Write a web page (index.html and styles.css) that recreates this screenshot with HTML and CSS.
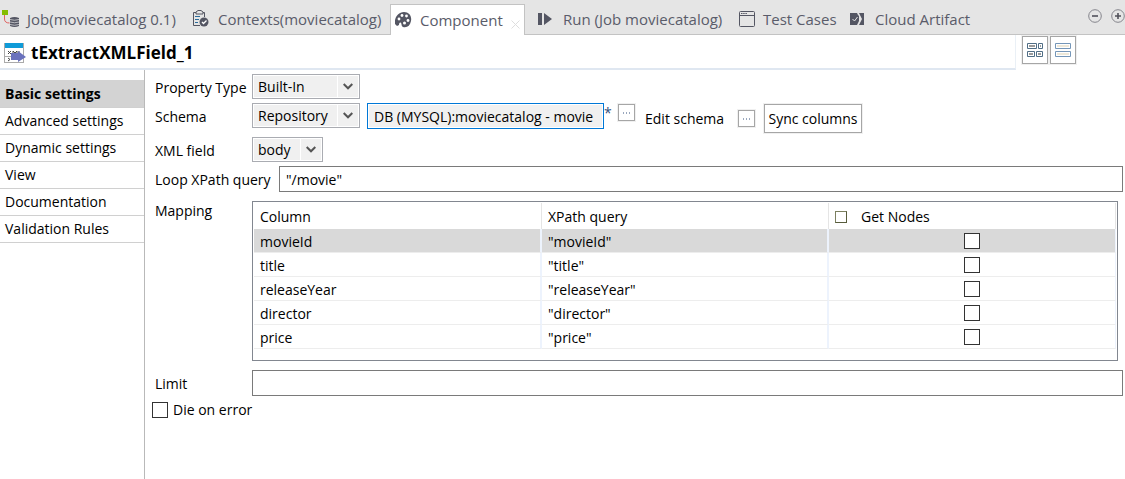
FILE: index.html
```html
<!DOCTYPE html>
<html lang="en">
<head>
<meta charset="utf-8">
<title>tExtractXMLField_1</title>
<link rel="stylesheet" href="styles.css">
</head>
<body>
<header class="tabbar">
  <nav class="tabs" role="tablist">
    <button class="tab tab-job" role="tab">
      <svg width="18" height="18" viewBox="0 0 18 18"><path d="M3.500 5v4q0 4 5 4" fill="none" stroke="#e0605e" stroke-width="1"/><rect x="1" y="0" width="6" height="5" fill="#84bd00"/><path d="M9 8q4.500-2 9 0v8q-4.500 2-9 0z" fill="#545663"/><path d="M9 9.500q4.500 1.500 9 0M9 12q4.500 1.500 9 0M9 14.500q4.500 1.500 9 0" fill="none" stroke="#d5d5d8" stroke-width=".8"/></svg>
      <span>Job(moviecatalog 0.1)</span>
    </button>
    <button class="tab tab-contexts" role="tab">
      <svg width="17" height="18" viewBox="0 0 17 18"><path d="M4 2.500H1.500v13H8M10 2.500h2.500V7" fill="none" stroke="#545663"/><path d="M4 4V2l2-1.500h3L11 2v2z" fill="#e5e5e5" stroke="#545663"/><path d="M3 6.500h5M3 9.500h4M3 12.500h3" stroke="#2b6c9b"/><circle cx="12" cy="12" r="4.500" fill="#545663"/><path d="M10 12l1.500 1.500 3-3" fill="none" stroke="#fff" stroke-width="1.300"/></svg>
      <span>Contexts(moviecatalog)</span>
    </button>
    <button class="tab tab-active" role="tab" aria-selected="true">
      <svg width="17" height="16" viewBox="0 0 17 16"><path d="M9 0C14 0 17 4 16 9s-4 7-8 6c-2-1-1-3-2-4s-2 0-2 2l-2 1-2-2C-1 6 3 0 9 0z" fill="#545663"/><g fill="#fff"><circle cx="4" cy="7" r="1.400"/><circle cx="7" cy="3.500" r="1.400"/><circle cx="11.500" cy="4" r="1.400"/><circle cx="13" cy="8.500" r="1.400"/><circle cx="9.500" cy="11" r="1.500"/></g></svg>
      <span>Component</span>
      <svg class="close" width="9" height="9" viewBox="0 0 9 9"><path d="M.5.5l8 8m0-8l-8 8" stroke="#dedede"/></svg>
    </button>
    <button class="tab tab-run" role="tab">
      <svg width="15" height="12" viewBox="0 0 15 12"><path d="M0 0h4v12H0zM6 0l8 6-8 6z" fill="#545663"/></svg>
      <span>Run (Job moviecatalog)</span>
    </button>
    <button class="tab tab-tests" role="tab">
      <svg width="16" height="16" viewBox="0 0 16 16"><rect x=".5" y=".5" width="15" height="15" rx="1" fill="none" stroke="#545663"/><path d="M1 4.500h14" stroke="#545663"/><path d="M2 2.500h6" stroke="#545663" stroke-dasharray="1.500 .7"/></svg>
      <span>Test Cases</span>
    </button>
    <button class="tab tab-cloud" role="tab">
      <svg width="15" height="12" viewBox="0 0 15 12"><path d="M0 0h7l1 2 1 1v5l-1 2-1 2H0zM9 0h5v12H9l3-6z" fill="#545663"/><path d="M2.500 6l2 2 3-4" fill="none" stroke="#e5e5e5"/></svg>
      <span>Cloud Artifact</span>
    </button>
  </nav>
  <div class="window-tools">
    <button class="plain" aria-label="Minimize"><svg width="14" height="14" viewBox="0 0 14 14"><circle cx="7" cy="7" r="6.300" fill="none" stroke="#85858c"/><path d="M4 7h6" stroke="#50505a" stroke-width="1.600"/></svg></button>
    <button class="plain" aria-label="Maximize"><svg width="14" height="14" viewBox="0 0 14 14"><circle cx="7" cy="7" r="6.300" fill="none" stroke="#85858c"/><path d="M4 7h6M7 4v6" stroke="#50505a" stroke-width="1.600"/></svg></button>
  </div>
</header>

<div class="titlebar">
  <div class="title">
    <svg width="22" height="20" viewBox="0 0 22 20"><rect x=".5" y=".5" width="19" height="19" fill="#fff" stroke="#aaa"/><path d="M1 0h18v5H1z" fill="#0f9bd8"/><path d="M0 13.500h20" stroke="#aaa"/><path d="M4 8l3 3M7 8l-3 3M9 11V8l2 2 2-2v3M15 8v3M4 15l2 1.500L4 18" fill="none" stroke="#444"/><path d="M7 10h7V8l8 6-8 5v-2H7z" fill="#6a72bd"/></svg>
    <h1>tExtractXMLField_1</h1>
  </div>
  <div class="layouts">
    <button class="layout-btn" aria-label="Table layout"><svg width="16" height="14" viewBox="0 0 16 14"><g fill="#fff" stroke="#4f6d85"><path d="M.5.5h9v5h-9zM11.500.5h4v5h-4zM.5 8.500h7v5h-7zM9.500 8.500h6v5h-6z"/></g><path d="M2 2h6v2H2zM13 2h1v2h-1zM2 10h4v2H2zM11 10h3v2h-3z" fill="#9b9b9b"/></svg></button>
    <button class="layout-btn" aria-label="List layout"><svg width="16" height="14" viewBox="0 0 16 14"><path d="M.5.5h15v5H.5zM.5 8.500h15v5H.5z" fill="#fff" stroke="#7596b8"/><path d="M2 2h12v2H2zM2 10h12v2H2z" fill="#eee8d8"/></svg></button>
  </div>
</div>

<div class="content">
  <nav class="side">
    <a class="side-item side-current" href="#basic">Basic settings</a>
    <a class="side-item" href="#advanced">Advanced settings</a>
    <a class="side-item" href="#dynamic">Dynamic settings</a>
    <a class="side-item" href="#view">View</a>
    <a class="side-item" href="#documentation">Documentation</a>
    <a class="side-item" href="#validation">Validation Rules</a>
  </nav>
  <main class="form">
    <div class="row">
      <label class="label" for="ptype">Property Type</label>
      <span class="combo"><select id="ptype" class="wide"><option>Built-In</option></select><svg class="arrow" width="10" height="7" viewBox="0 0 10 7"><path d="M.7 1L5 5.300 9.300 1" fill="none" stroke="#555" stroke-width="2"/></svg></span>
    </div>
    <div class="row row-schema">
      <label class="label" for="schema">Schema</label>
      <span class="combo"><select id="schema" class="wide"><option>Repository</option></select><svg class="arrow" width="10" height="7" viewBox="0 0 10 7"><path d="M.7 1L5 5.300 9.300 1" fill="none" stroke="#555" stroke-width="2"/></svg></span>
      <input class="repo" type="text" aria-label="Repository schema" readonly value="DB (MYSQL):moviecatalog - movie">
      <span class="star">*</span>
      <button class="dots dots-first" aria-label="Choose schema"><svg width="8" height="2" viewBox="0 0 8 2"><path d="M0 1h8" stroke="#35507c" stroke-dasharray="1 2"/></svg></button>
      <span class="edit" id="edit">Edit schema</span>
      <button class="dots" aria-labelledby="edit"><svg width="8" height="2" viewBox="0 0 8 2"><path d="M0 1h8" stroke="#35507c" stroke-dasharray="1 2"/></svg></button>
      <button class="sync">Sync columns</button>
    </div>
    <div class="row row-xml">
      <label class="label" for="xml">XML field</label>
      <span class="combo"><select id="xml" class="narrow"><option>body</option></select><svg class="arrow" width="10" height="7" viewBox="0 0 10 7"><path d="M.7 1L5 5.300 9.300 1" fill="none" stroke="#555" stroke-width="2"/></svg></span>
    </div>
    <div class="row row-loop">
      <label class="label label-loop" for="loop">Loop XPath query</label>
      <input class="field" id="loop" type="text" value="&quot;/movie&quot;">
    </div>
    <div class="row row-map">
      <span class="label" id="mapping">Mapping</span>
      <div class="table-box">
        <table aria-labelledby="mapping">
          <colgroup><col class="col-name"><col class="col-query"><col></colgroup>
          <thead><tr><th>Column</th><th>XPath query</th><th><label class="nodes"><input class="check check-small" type="checkbox">Get Nodes</label></th></tr></thead>
          <tbody>
            <tr class="selected"><td>movieId</td><td>"movieId"</td><td class="center"><input class="check" type="checkbox" aria-label="Get nodes of movieId"></td></tr>
            <tr><td>title</td><td>"title"</td><td class="center"><input class="check" type="checkbox" aria-label="Get nodes of title"></td></tr>
            <tr><td>releaseYear</td><td>"releaseYear"</td><td class="center"><input class="check" type="checkbox" aria-label="Get nodes of releaseYear"></td></tr>
            <tr><td>director</td><td>"director"</td><td class="center"><input class="check" type="checkbox" aria-label="Get nodes of director"></td></tr>
            <tr><td>price</td><td>"price"</td><td class="center"><input class="check" type="checkbox" aria-label="Get nodes of price"></td></tr>
          </tbody>
        </table>
      </div>
    </div>
    <div class="row row-limit">
      <label class="label" for="limit">Limit</label>
      <input class="field" id="limit" type="text">
    </div>
    <label class="die"><input class="check" type="checkbox">Die on error</label>
  </main>
</div>
</body>
</html>
```

FILE: styles.css
```css
* { box-sizing: border-box; }
html { height: 100%; }
body {
  margin: 0;
  min-height: 100%;
  display: flex;
  flex-direction: column;
  background: #fff;
  color: #000;
  font: 14px/20px "Open Sans", "Noto Sans", sans-serif;
}
button, input, select { font: inherit; color: inherit; }
button, input { margin: 0; padding: 0; }
svg { display: block; flex: none; }

.tabbar {
  display: flex;
  justify-content: space-between;
  height: 35px;
  background: #e5e5e5;
  border-bottom: 1px solid #c3c3c3;
}
.tabs { display: flex; align-items: flex-end; white-space: nowrap; }
.tab {
  display: flex;
  align-items: center;
  gap: 9px;
  height: 31px;
  border: 0;
  background: none;
  color: #5a5c6a;
  font-size: 15px;
}
.tab-job { width: 192px; padding-left: 1px; gap: 8px; }
.tab-contexts { width: 198px; }
.tab-active {
  width: 135px;
  padding: 0 4px;
  gap: 8px;
  background: #fff;
  border: 1px solid #c3c3c3;
  border-bottom: 0;
  margin-bottom: -1px;
  height: 31px;
}
.close { margin: 8px 0 0 auto; }
.tab-run { width: 213px; padding-left: 13px; gap: 10px; }
.tab-tests { width: 112px; padding-left: 1px; gap: 8px; }
.tab-cloud { gap: 10px; }
.window-tools { display: flex; gap: 9px; padding-top: 9px; align-items: flex-start; }
.plain { border: 0; background: none; }

.titlebar { display: flex; height: 35px; }
.title {
  flex: 1;
  display: flex;
  align-items: center;
  gap: 5px;
  padding: 3px 0 0 4px;
  border-bottom: 2px solid #dfe7f1;
  border-right: 1px solid #eaf0f6;
}
h1 { margin: 0; font-size: 17px; line-height: 24px; }
.layouts { display: flex; gap: 2px; width: 109px; padding: 1px 0 0 6px; }
.layout-btn {
  display: grid;
  place-items: center;
  width: 26px;
  height: 28px;
  background: #fff;
  border: 1px solid #a6a6a6;
  box-shadow: 0 0 0 1px #f0f0f0;
}

.content { flex: 1; display: flex; }
.side { width: 145px; flex: none; padding-top: 10px; border-right: 1px solid #b9b9b9; }
.side-item {
  display: block;
  height: 27px;
  padding: 3px 5px;
  border-bottom: 1px solid #d0d0d0;
  color: inherit;
  text-decoration: none;
  white-space: nowrap;
}
.side-current { height: 28px; padding-top: 4px; font-weight: 700; background: #d3d3d3; }

.form { flex: 1; min-width: 0; padding: 4px 2px 0 10px; }
.row { display: flex; align-items: center; white-space: nowrap; }
.label { width: 97px; flex: none; padding-top: 2px; }
.label-loop { width: 124px; }
.combo { display: grid; align-items: center; justify-items: end; }
.combo > * { grid-area: 1 / 1; }
select {
  appearance: none;
  height: 25px;
  padding: 0 5px;
  border: 1px solid #aaacb2;
  border-radius: 0;
  background: linear-gradient(to right, transparent calc(100% - 22px), #fff calc(100% - 22px), #fff calc(100% - 21px), transparent calc(100% - 21px)) #f0f0f0;
  box-shadow: inset 0 0 0 1px #fff;
}
.wide { width: 108px; }
.narrow { width: 71px; }
.arrow { margin-right: 7px; pointer-events: none; }

.row-schema { height: 29px; margin-top: 4px; align-items: flex-start; }
.row-schema .label { padding-top: 4px; }
.repo {
  width: 237px;
  height: 26px;
  margin-left: 7px;
  padding: 0 0 0 6px;
  border: 1px solid #0078d7;
  background: #f0f0f0;
  box-shadow: inset 0 0 0 1px #fff;
}
.star { width: 14px; color: #35507c; }
.dots {
  display: grid;
  place-items: center;
  flex: none;
  width: 17px;
  height: 17px;
  border: 1px solid #a6a6a6;
  background: #fff;
  box-shadow: 0 0 0 1px #f0f0f0;
}
.dots-first { margin-top: 1px; }
.edit { width: 93px; margin: 6px 0 0 10px; flex: none; }
.edit + .dots { margin-top: 7px; }
.sync {
  width: 98px;
  height: 29px;
  flex: none;
  margin: 1px 0 0 9px;
  border: 1px solid #a6a6a6;
  background: #fff;
  box-shadow: 0 0 0 1px #f0f0f0;
}
.row-xml { margin-top: 5px; }
.row-loop { margin-top: 4px; }
.field {
  flex: 1;
  min-width: 0;
  height: 26px;
  padding: 0 6px;
  border: 1px solid #7a7a7a;
  background: #fff;
}
.row-map { align-items: flex-start; margin-top: 9px; }
.row-map .label { padding-top: 0; }
.table-box { flex: 1; min-width: 0; height: 160px; margin-right: 5px; padding: 1px; border: 1px solid #828790; }
table { width: 100%; border-collapse: separate; border-spacing: 0; table-layout: fixed; }
.col-name { width: 288px; }
.col-query { width: 287px; }
th { height: 26px; padding: 2px 6px 0; text-align: left; font-weight: 400; border-right: 1px solid #e5e5e5; }
td { height: 24px; padding: 2px 6px 0; border-right: 2px solid #edf3fd; border-bottom: 1px solid #ededed; }
td:last-child { border-right-width: 1px; }
.selected td { background: #d9d9d9; }
td.center { padding-top: 0; }
.check {
  appearance: none;
  display: block;
  flex: none;
  width: 16px;
  height: 16px;
  border: 1px solid #333;
  background: #fff;
}
.center .check { margin: 0 auto; }
.check-small { width: 12px; height: 12px; border-color: #7c8060 #585c3c #585c3c #7c8060; }
.nodes { display: flex; align-items: center; gap: 14px; }
.row-limit { margin-top: 9px; }
.die { display: flex; align-items: center; gap: 5px; width: max-content; margin: 4px 0 0 -3px; }
```
